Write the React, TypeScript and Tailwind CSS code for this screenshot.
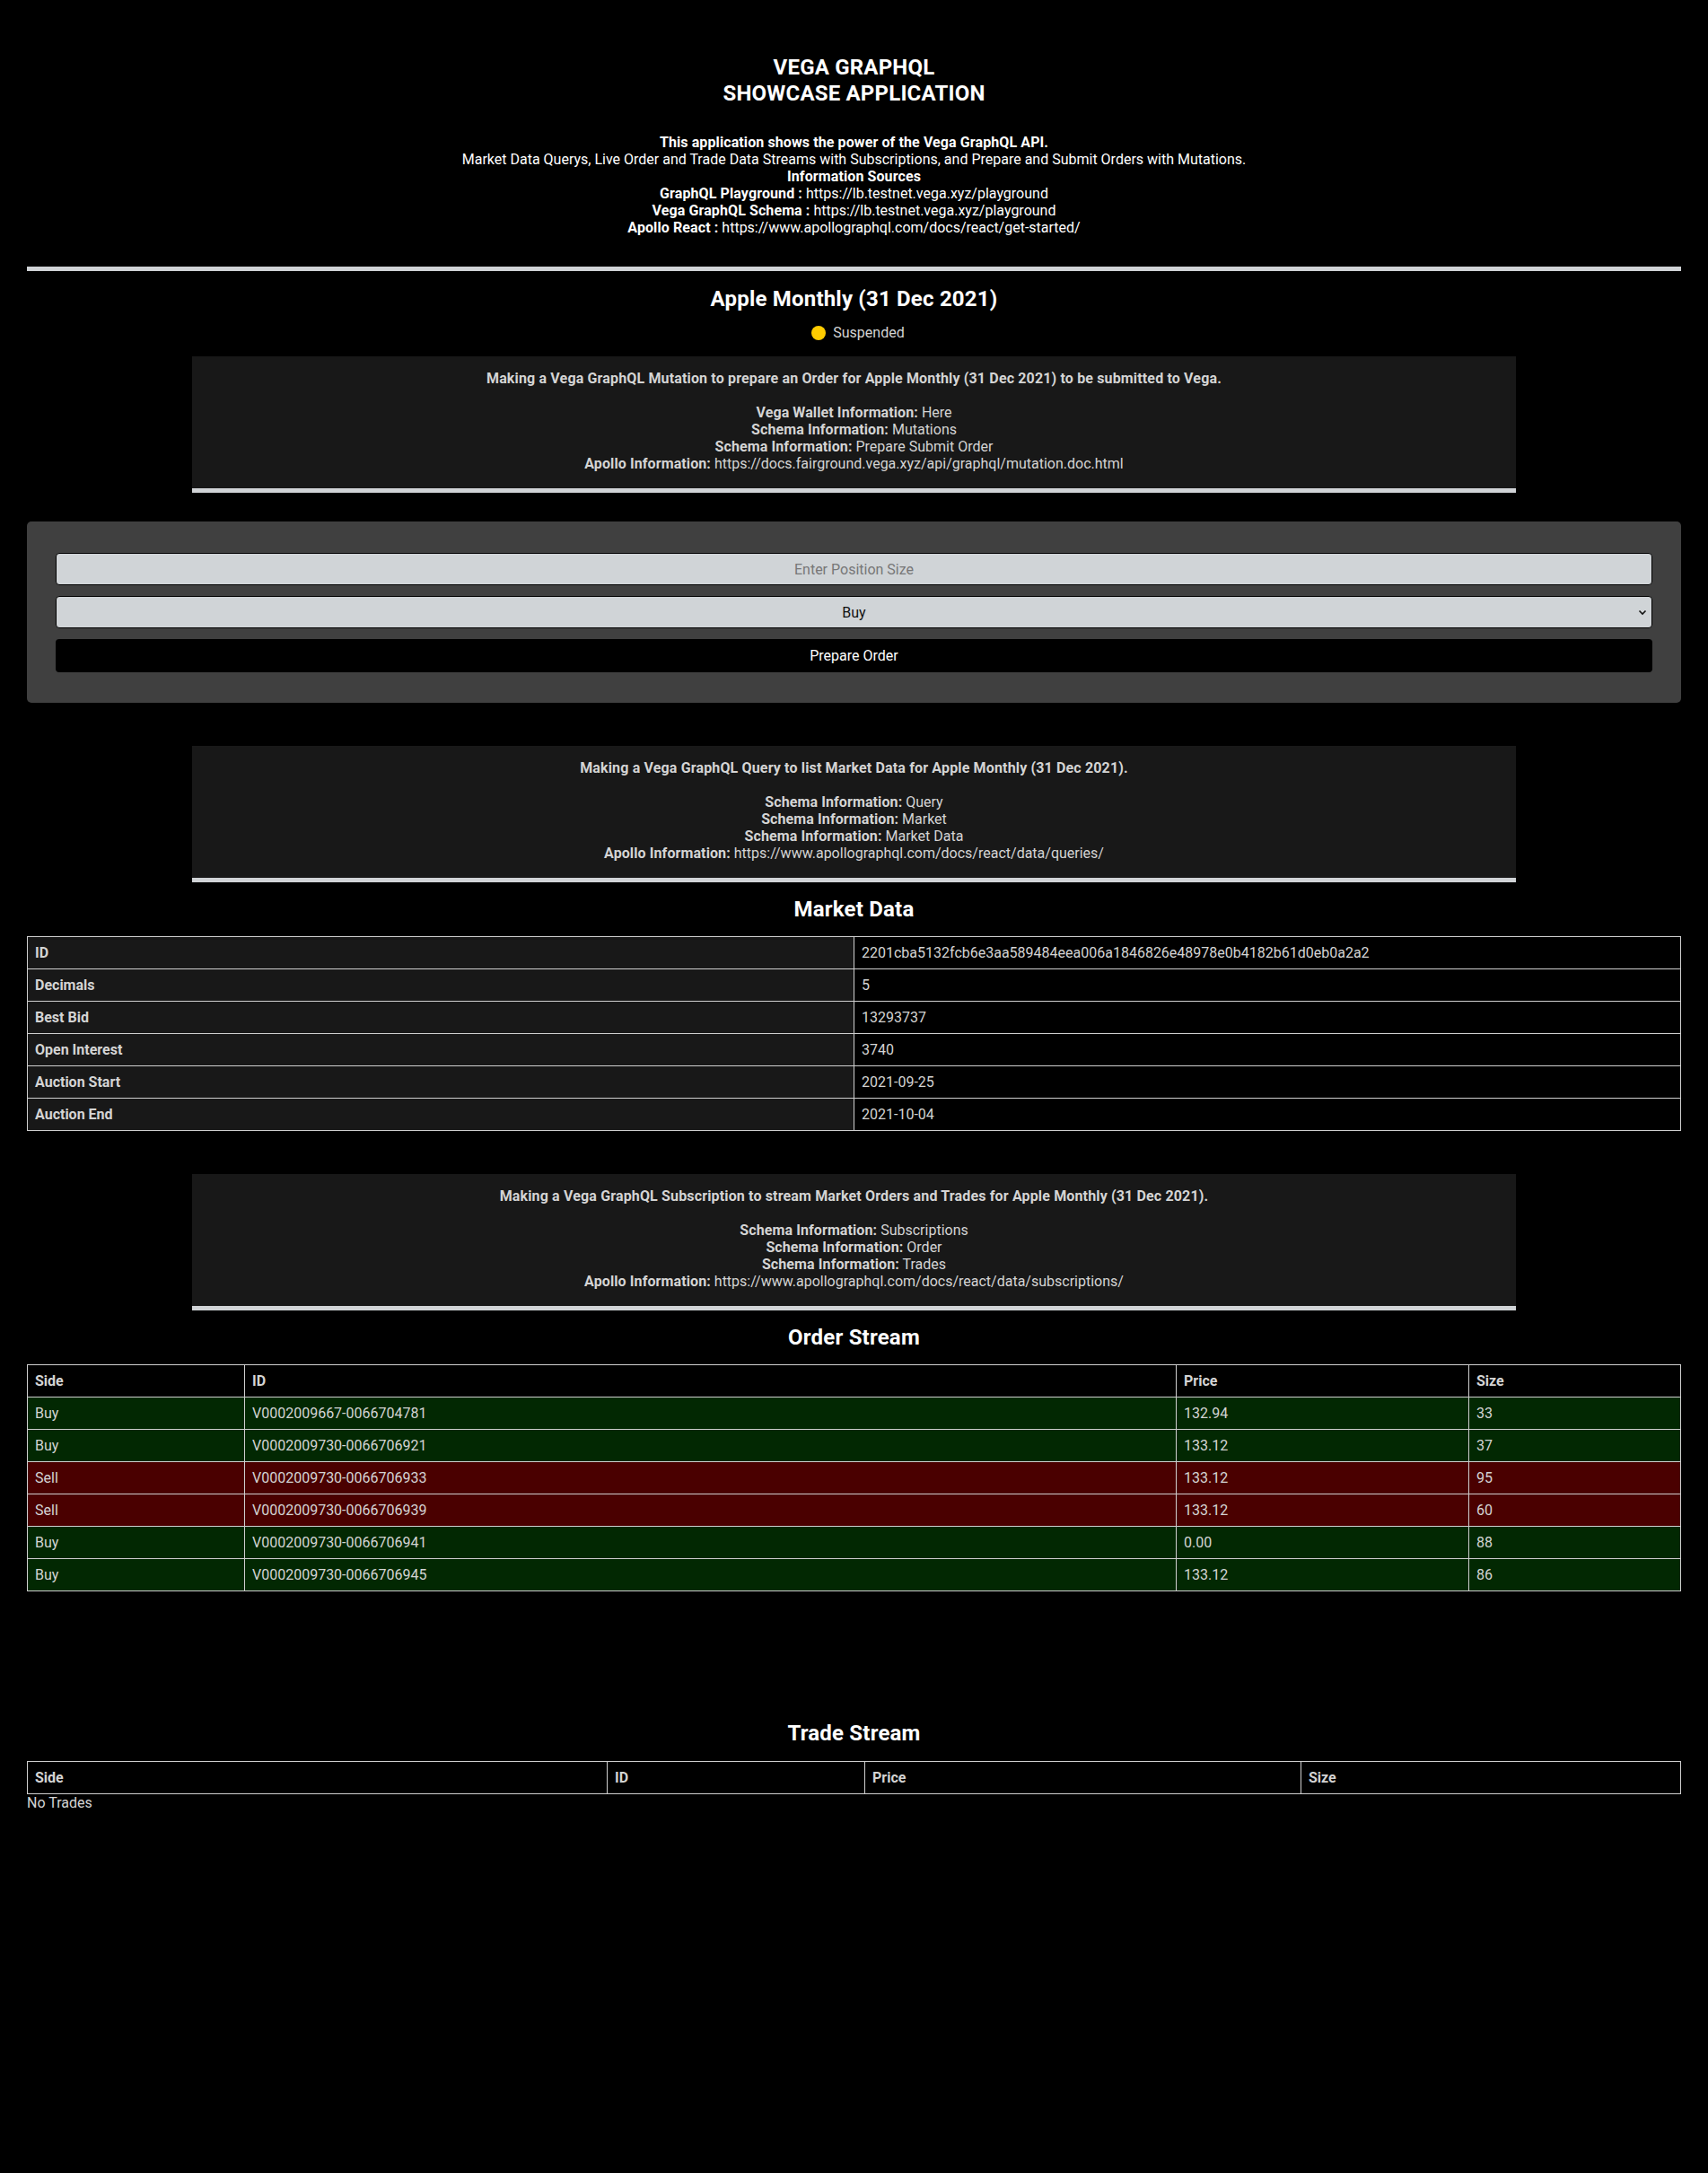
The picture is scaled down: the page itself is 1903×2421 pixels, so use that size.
const orders = [
  { side: "Buy", id: "V0002009667-0066704781", price: "132.94", size: "33" },
  { side: "Buy", id: "V0002009730-0066706921", price: "133.12", size: "37" },
  { side: "Sell", id: "V0002009730-0066706933", price: "133.12", size: "95" },
  { side: "Sell", id: "V0002009730-0066706939", price: "133.12", size: "60" },
  { side: "Buy", id: "V0002009730-0066706941", price: "0.00", size: "88" },
  { side: "Buy", id: "V0002009730-0066706945", price: "133.12", size: "86" },
];

const marketData = [
  { label: "ID", value: "2201cba5132fcb6e3aa589484eea006a1846826e48978e0b4182b61d0eb0a2a2" },
  { label: "Decimals", value: "5" },
  { label: "Best Bid", value: "13293737" },
  { label: "Open Interest", value: "3740" },
  { label: "Auction Start", value: "2021-09-25" },
  { label: "Auction End", value: "2021-10-04" },
];

const InfoBox = ({ title, lines }: { title: string; lines: [string, string][] }) => (
  <div className="mx-auto w-[80%] border-b-[5px] border-[#d0d3d6] bg-[#181818] pt-[15px] pb-[18px] text-center text-[16px] leading-[normal] text-[#d4d4d4]">
    <p className="font-bold tracking-[0.15px]">{title}</p>
    <br />
    {lines.map(([k, v]) => (
      <p key={k + v}>
        <span className="font-bold tracking-[0.1px]">{k}:</span> {v}
      </p>
    ))}
  </div>
);

const Heading = ({ children, className }: { children: React.ReactNode; className: string }) => (
  <h2 className={`text-center text-[24px] font-bold leading-[28px] tracking-[0.2px] text-white ${className}`}>{children}</h2>
);

const cell = "border border-[#cfcfcf] px-[8px] py-[8px] text-left leading-[19px]";

export default function App() {
  return (
    <div
      className="min-h-[2421px] bg-black px-[30px] pt-[61px] text-[16px] leading-[normal] text-white"
      style={{ fontFamily: "Roboto, 'Liberation Sans', sans-serif" }}
    >
      {/* header */}
      <h1 className="text-center text-[24px] font-bold leading-[29px] tracking-[0.2px] text-white">
        VEGA GRAPHQL
        <br />
        SHOWCASE APPLICATION
      </h1>
      <div className="mt-[30px] text-center">
        <p className="font-bold tracking-[0.1px]">This application shows the power of the Vega GraphQL API.</p>
        <p>Market Data Querys, Live Order and Trade Data Streams with Subscriptions, and Prepare and Submit Orders with Mutations.</p>
        <p className="font-bold tracking-[0.1px]">Information Sources</p>
        <p>
          <span className="font-bold tracking-[0.1px]">GraphQL Playground :</span> https://lb.testnet.vega.xyz/playground
        </p>
        <p>
          <span className="font-bold tracking-[0.1px]">Vega GraphQL Schema :</span> https://lb.testnet.vega.xyz/playground
        </p>
        <p>
          <span className="font-bold tracking-[0.1px]">Apollo React :</span> https://www.apollographql.com/docs/react/get-started/
        </p>
      </div>
      <div className="mt-[34px] h-[5px] bg-[#d0d3d6]" />

      {/* market */}
      <Heading className="mt-[17px]">Apple Monthly (31 Dec 2021)</Heading>
      <div className="mt-[14px] flex items-center justify-center gap-[8px] pl-[9px] text-[#d4d4d4]">
        <span className="h-[16px] w-[16px] rounded-full bg-[#ffcc00]" />
        <span>Suspended</span>
      </div>

      <div className="mt-[17px]">
        <InfoBox
          title="Making a Vega GraphQL Mutation to prepare an Order for Apple Monthly (31 Dec 2021) to be submitted to Vega."
          lines={[
            ["Vega Wallet Information", "Here"],
            ["Schema Information", "Mutations"],
            ["Schema Information", "Prepare Submit Order"],
            ["Apollo Information", "https://docs.fairground.vega.xyz/api/graphql/mutation.doc.html"],
          ]}
        />
      </div>

      {/* order form */}
      <div className="mt-[32px] flex flex-col gap-[12px] rounded-[5px] bg-[#404040] px-[32px] pt-[35px] pb-[34px]">
        <input
          placeholder="Enter Position Size"
          className="h-[36px] w-full rounded-[4px] border border-black bg-[#d0d4d7] text-center text-[16px] text-black outline-none placeholder:text-[#777]"
        />
        <div className="relative">
          <select className="h-[36px] w-full appearance-none rounded-[4px] border border-black bg-[#d0d4d7] text-center text-[16px] text-[#111] outline-none [text-align-last:center]">
            <option>Buy</option>
            <option>Sell</option>
          </select>
          <svg className="pointer-events-none absolute right-[6px] top-[13px] h-[10px] w-[10px]" viewBox="0 0 10 10" fill="none" stroke="#111" strokeWidth="1.6">
            <path d="M1.5 3.5 L5 7 L8.5 3.5" />
          </svg>
        </div>
        <button className="h-[37px] w-full rounded-[4px] bg-black text-[16px] text-white">Prepare Order</button>
      </div>

      {/* market data */}
      <div className="mt-[48px]">
        <InfoBox
          title="Making a Vega GraphQL Query to list Market Data for Apple Monthly (31 Dec 2021)."
          lines={[
            ["Schema Information", "Query"],
            ["Schema Information", "Market"],
            ["Schema Information", "Market Data"],
            ["Apollo Information", "https://www.apollographql.com/docs/react/data/queries/"],
          ]}
        />
      </div>
      <Heading className="mt-[16px]">Market Data</Heading>
      <table className="mt-[16px] w-full border-collapse text-[#d4d4d4]">
        <tbody>
          {marketData.map((row) => (
            <tr key={row.label}>
              <td className={`${cell} w-1/2 bg-[#181818] font-bold`}>{row.label}</td>
              <td className={`${cell} w-1/2 bg-black`}>{row.value}</td>
            </tr>
          ))}
        </tbody>
      </table>

      {/* order stream */}
      <div className="mt-[48px]">
        <InfoBox
          title="Making a Vega GraphQL Subscription to stream Market Orders and Trades for Apple Monthly (31 Dec 2021)."
          lines={[
            ["Schema Information", "Subscriptions"],
            ["Schema Information", "Order"],
            ["Schema Information", "Trades"],
            ["Apollo Information", "https://www.apollographql.com/docs/react/data/subscriptions/"],
          ]}
        />
      </div>
      <Heading className="mt-[16px]">Order Stream</Heading>
      <table className="mt-[16px] w-full table-fixed border-collapse text-[#d4d4d4]">
        <thead>
          <tr className="bg-black">
            <th className={`${cell} w-[242px] font-bold`}>Side</th>
            <th className={`${cell} w-[1038px] font-bold`}>ID</th>
            <th className={`${cell} w-[326px] font-bold`}>Price</th>
            <th className={`${cell} font-bold`}>Size</th>
          </tr>
        </thead>
        <tbody>
          {orders.map((o) => (
            <tr key={o.id} className={o.side === "Buy" ? "bg-[#022802]" : "bg-[#4a0000]"}>
              <td className={cell}>{o.side}</td>
              <td className={cell}>{o.id}</td>
              <td className={cell}>{o.price}</td>
              <td className={cell}>{o.size}</td>
            </tr>
          ))}
        </tbody>
      </table>

      {/* trade stream */}
      <Heading className="mt-[144px]">Trade Stream</Heading>
      <table className="mt-[17px] w-full table-fixed border-collapse text-[#d4d4d4]">
        <thead>
          <tr className="bg-black">
            <th className={`${cell} w-[646px] font-bold`}>Side</th>
            <th className={`${cell} w-[287px] font-bold`}>ID</th>
            <th className={`${cell} w-[486px] font-bold`}>Price</th>
            <th className={`${cell} font-bold`}>Size</th>
          </tr>
        </thead>
      </table>
      <p className="text-[#d4d4d4]">No Trades</p>
    </div>
  );
}
